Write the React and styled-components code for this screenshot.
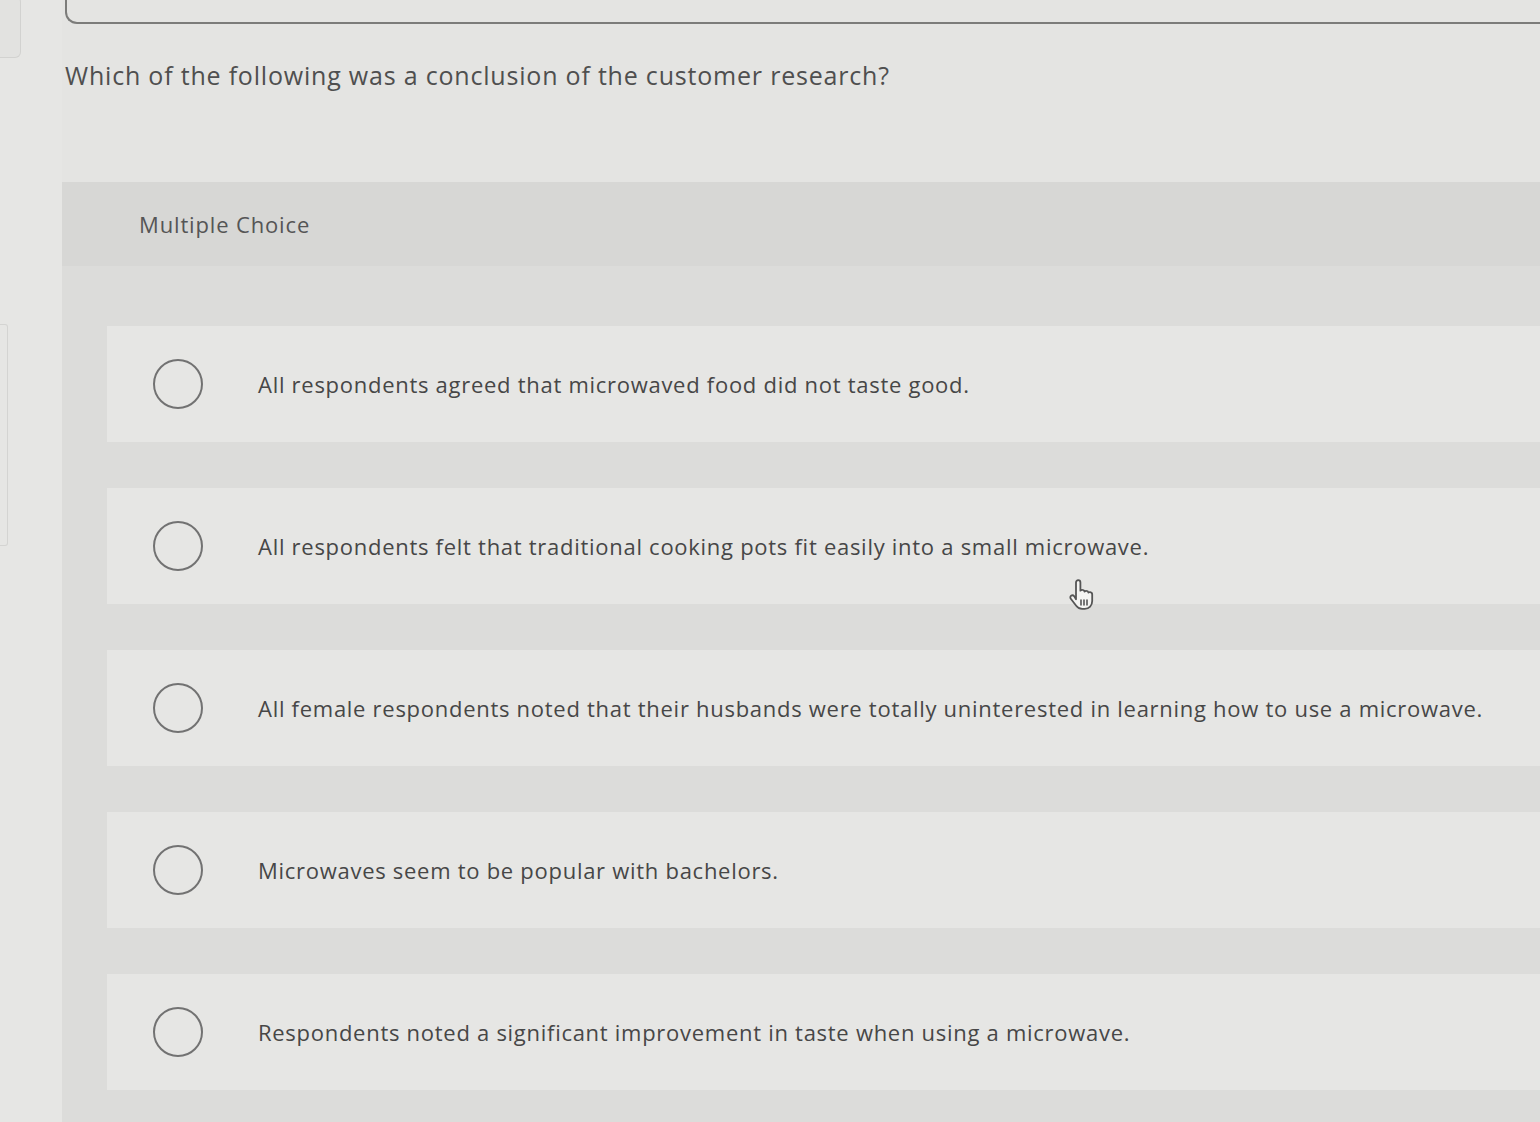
import styled, { createGlobalStyle } from "styled-components";

const GlobalStyle = createGlobalStyle`
  html, body {
    margin: 0;
    padding: 0;
    background: #e4e4e2;
    font-family: "Open Sans", Lato, sans-serif;
    overflow: hidden;
  }
`;

const options = [
  "All respondents agreed that microwaved food did not taste good.",
  "All respondents felt that traditional cooking pots fit easily into a small microwave.",
  "All female respondents noted that their husbands were totally uninterested in learning how to use a microwave.",
  "Microwaves seem to be popular with bachelors.",
  "Respondents noted a significant improvement in taste when using a microwave.",
];

const App = () => {
  return (
    <Page>
      <GlobalStyle />
      <Gutter>
        <SideTab />
        <SideEdge />
      </Gutter>
      <Main>
        <TopBox />
        <Question>Which of the following was a conclusion of the customer research?</Question>
        <Panel>
          <PanelHeader>Multiple Choice</PanelHeader>
          <OptionList>
            {options.map((text, index) => (
              <OptionRow key={index}>
                <Radio />
                <OptionText>{text}</OptionText>
              </OptionRow>
            ))}
          </OptionList>
          <Cursor>
            <svg width="30" height="32" viewBox="0 0 30 32" fill="none">
              <path
                d="M9 3.5c0-1.4 1-2.4 2.2-2.4s2.2 1 2.2 2.4v8.2c.5-.6 1.3-1 2.1-.9 1.1.1 1.8.8 2 1.7.5-.5 1.2-.8 2-.7 1.1.1 1.8.9 1.9 1.8.5-.4 1.1-.6 1.8-.5 1.2.2 2 1.2 2 2.5v6.5c0 4.5-3 7.8-7.4 7.8h-2.6c-2.7 0-4.4-1.1-6-3.2l-5.4-6.9c-.8-1-.6-2.3.3-3 .9-.7 2.2-.6 3 .3L9 20.3V3.5z"
                fill="#f4f4f2"
                stroke="#555"
                strokeWidth="1.8"
                strokeLinejoin="round"
              />
              <path d="M14 21v5M17 21v5M20 21v5" stroke="#555" strokeWidth="1.6" strokeLinecap="round" />
            </svg>
          </Cursor>
        </Panel>
      </Main>
    </Page>
  );
};

export default App;

const Page = styled.div`
  display: flex;
  width: 1540px;
  height: 1122px;
`;

const Gutter = styled.div`
  width: 62px;
  flex-shrink: 0;
  display: flex;
  flex-direction: column;
  background: #e6e6e4;
`;

const SideTab = styled.div`
  width: 20px;
  height: 60px;
  margin-top: -4px;
  border: 1px solid #d2d2d0;
  border-left: none;
  border-radius: 0 6px 6px 0;
  background: #e2e2e0;
`;

const SideEdge = styled.div`
  width: 7px;
  height: 220px;
  margin-top: 266px;
  border: 1px solid #d4d4d2;
  border-left: none;
  border-radius: 0 3px 3px 0;
`;

const Main = styled.div`
  flex: 1;
  display: flex;
  flex-direction: column;
`;

const TopBox = styled.div`
  height: 24px;
  margin-left: 3px;
  margin-top: -2px;
  border-left: 2px solid #7c7c7a;
  border-bottom: 2px solid #7c7c7a;
  border-bottom-left-radius: 12px;
`;

const Question = styled.h1`
  margin: 36px 0 0 3px;
  font-size: 25px;
  line-height: 30px;
  font-weight: 400;
  letter-spacing: 0.8px;
  color: #4f4f4f;
  white-space: nowrap;
`;

const Panel = styled.section`
  position: relative;
  margin-top: 92px;
  flex: 1;
  display: flex;
  flex-direction: column;
  background: #dcdcda;
`;

const PanelHeader = styled.div`
  height: 84px;
  display: flex;
  align-items: center;
  padding-left: 77px;
  background: #d7d7d5;
  font-size: 22px;
  letter-spacing: 0.85px;
  color: #555;
`;

const OptionList = styled.div`
  display: flex;
  flex-direction: column;
  gap: 46px;
  padding: 60px 0 0 45px;
`;

const OptionRow = styled.div`
  height: 116px;
  display: flex;
  align-items: center;
  padding-left: 46px;
  background: #e6e6e4;
`;

const Radio = styled.span`
  width: 46px;
  height: 46px;
  flex-shrink: 0;
  border: 2px solid #727272;
  border-radius: 50%;
`;

const OptionText = styled.span`
  margin-left: 55px;
  font-size: 22px;
  letter-spacing: 0.72px;
  color: #474747;
  white-space: nowrap;
`;

const Cursor = styled.div`
  position: absolute;
  left: 1005px;
  top: 397px;
  width: 30px;
  height: 32px;
`;
